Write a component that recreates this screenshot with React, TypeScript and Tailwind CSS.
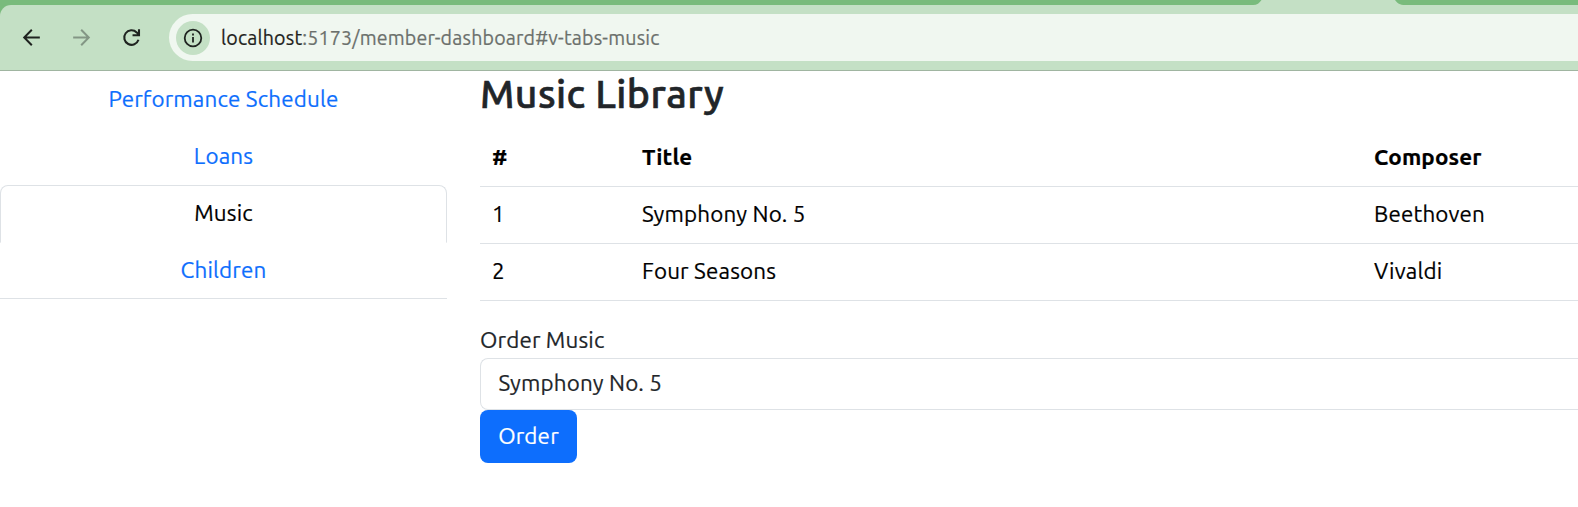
import type { ReactNode } from 'react';

const FONT = "font-['Ubuntu','Noto_Sans',sans-serif]";

function BrowserBar() {
  return (
    <header className="flex h-[71px] shrink-0 flex-col bg-[#79bb7c]">
      <div className="flex h-[5px] shrink-0">
        <svg className="ml-[1253px] h-[5px] w-[152px] shrink-0" viewBox="0 0 152 5">
          <path d="M0 5C4 5 6.500 3 8.500 0H142C144 3 147 5 152 5z" fill="#c4e0c5" />
        </svg>
      </div>
      <div className="flex h-[66px] items-start rounded-tl-[11px] border-b border-[#a0b5a1] bg-[#c4e0c5] pt-[9px]">
        <div className="flex h-[47px] w-[169px] shrink-0 items-center pl-[18.5px]">
          <svg className="size-[25px]" viewBox="0 0 24 24" fill="none" stroke="#1f2320" strokeWidth="1.9">
            <path d="M20 12H5.500M12.300 4.600 5 12l7.300 7.400" />
          </svg>
          <svg className="ml-[25px] size-[25px]" viewBox="0 0 24 24" fill="none" stroke="#839685" strokeWidth="1.9">
            <path d="M4 12h14.500M11.700 4.600 19 12l-7.300 7.400" />
          </svg>
          <svg className="ml-[25.5px] size-[25px]" viewBox="0 0 24 24" fill="none" stroke="#1f2320" strokeWidth="2">
            <path d="M18.700 14.200A7 7 0 1 1 17 7.100L19 9.300M19.200 4v5.900h-6.200" />
          </svg>
        </div>
        <div className="flex h-[47px] flex-1 items-center rounded-l-full bg-[#f0f7f0] pl-[7px]">
          <div className="flex size-[34px] items-center justify-center rounded-full bg-[#c4e0c5]">
            <svg className="size-[20px]" viewBox="0 0 20 20" fill="none" stroke="#1f2320" strokeWidth="1.8">
              <circle cx="10" cy="10" r="8.300" />
              <path d="M10 9v5.500M10 5.500v2" />
            </svg>
          </div>
          <div className="ml-[11px] flex pt-px text-[19.6px] leading-[26px] tracking-[0.18px] whitespace-pre text-[#6b706c]">
            <span className="text-[#1f2320]">localhost</span>
            <span>:5173/member-dashboard#v-tabs-music</span>
          </div>
        </div>
      </div>
    </header>
  );
}

function Tab({ children, active = false }: { children: ReactNode; active?: boolean }) {
  return (
    <a
      className={
        active
          ? '-mb-px flex h-[58px] shrink-0 items-center justify-center rounded-t-[8px] border border-[#dee2e6] border-b-white pb-[3px] text-black'
          : 'flex h-[57px] shrink-0 items-center justify-center pb-0.5 text-[#0d6efd]'
      }
    >
      {children}
    </a>
  );
}

export default function App() {
  return (
    <div className={`${FONT} flex h-[507px] w-full flex-col overflow-hidden bg-white text-[22.4px] leading-[34px] tracking-[0.16px] text-[#212529] [-webkit-text-stroke-width:0.2px]`}>
      <BrowserBar />
      <main className="flex">
        <nav className="flex h-[228px] w-[447px] shrink-0 flex-col border-b border-[#dee2e6]">
          <Tab><span>Performance Schedule</span></Tab>
          <Tab><span>Loans</span></Tab>
          <Tab active><span>Music</span></Tab>
          <Tab><span>Children</span></Tab>
        </nav>
        <section className="ml-[33px] flex-1">
          <h2 className="flex h-[58px] text-[39.2px] leading-[45px] font-medium tracking-[0.44px] [-webkit-text-stroke-width:0.6px]"><span>Music Library</span></h2>
          <table className="w-full table-fixed border-collapse text-left text-black">
            <colgroup>
              <col className="w-[150px]" />
              <col className="w-[732px]" />
              <col />
            </colgroup>
            <thead>
              <tr className="h-[57px] border-b border-[#dee2e6] font-bold">
                <th className="pl-3"><span>#</span></th>
                <th className="pl-3"><span>Title</span></th>
                <th className="pl-3"><span>Composer</span></th>
              </tr>
            </thead>
            <tbody>
              <tr className="h-[57px] border-b border-[#dee2e6]">
                <td className="pb-0.5 pl-3"><span>1</span></td>
                <td className="pb-0.5 pl-3"><span>Symphony No. 5</span></td>
                <td className="pb-0.5 pl-3"><span>Beethoven</span></td>
              </tr>
              <tr className="h-[57px] border-b border-[#dee2e6]">
                <td className="pb-0.5 pl-3"><span>2</span></td>
                <td className="pb-0.5 pl-3"><span>Four Seasons</span></td>
                <td className="pb-0.5 pl-3"><span>Vivaldi</span></td>
              </tr>
            </tbody>
          </table>
          <div className="mt-[21px] flex h-[36px] items-center"><span>Order Music</span></div>
          <div className="flex h-[52px] items-center rounded-l-[8px] border border-r-0 border-[#dee2e6] pb-0.5 pl-[17.5px]">
            <span>Symphony No. 5</span>
          </div>
          <button className="flex h-[53px] w-[97px] items-center justify-center rounded-[8px] bg-[#0d6efd] text-white">
            <span>Order</span>
          </button>
        </section>
      </main>
    </div>
  );
}
